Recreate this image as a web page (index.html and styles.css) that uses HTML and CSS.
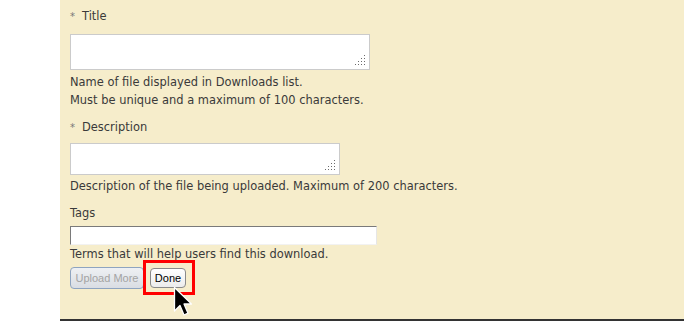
FILE: index.html
```html
<!DOCTYPE html>
<html>
<head>
<meta charset="utf-8">
<link rel="stylesheet" href="styles.css">
</head>
<body>
<div class="panel">
  <div class="label"><span class="req">*</span>Title</div>
  <div class="area area-title"><svg class="grip" width="11" height="11" viewBox="0 0 11 11"><g fill="#6b6b6b"><rect x="9" y="0" width="1" height="1"/><rect x="6" y="3" width="1" height="1"/><rect x="9" y="3" width="1" height="1"/><rect x="3" y="6" width="1" height="1"/><rect x="6" y="6" width="1" height="1"/><rect x="9" y="6" width="1" height="1"/><rect x="0" y="9" width="1" height="1"/><rect x="3" y="9" width="1" height="1"/><rect x="6" y="9" width="1" height="1"/><rect x="9" y="9" width="1" height="1"/></g></svg></div>
  <div class="help">Name of file displayed in Downloads list.</div>
  <div class="help">Must be unique and a maximum of 100 characters.</div>
  <div class="label label-gap"><span class="req">*</span>Description</div>
  <div class="area area-desc"><svg class="grip" width="11" height="11" viewBox="0 0 11 11"><g fill="#6b6b6b"><rect x="9" y="0" width="1" height="1"/><rect x="6" y="3" width="1" height="1"/><rect x="9" y="3" width="1" height="1"/><rect x="3" y="6" width="1" height="1"/><rect x="6" y="6" width="1" height="1"/><rect x="9" y="6" width="1" height="1"/><rect x="0" y="9" width="1" height="1"/><rect x="3" y="9" width="1" height="1"/><rect x="6" y="9" width="1" height="1"/><rect x="9" y="9" width="1" height="1"/></g></svg></div>
  <div class="help help-tight">Description of the file being uploaded. Maximum of 200 characters.</div>
  <div class="label label-tags">Tags</div>
  <div class="tags-input"></div>
  <div class="help help-flush">Terms that will help users find this download.</div>
  <div class="buttons">
    <button class="btn btn-disabled" disabled>Upload More</button>
    <div class="done-wrap">
      <span class="btn btn-done">Done</span>
      <div class="highlight"></div>
      <svg class="cursor" width="24" height="34" viewBox="0 0 24 34"><path d="M1.5 1.5 L1.5 25 L7 19.5 L11 29 L15 27.2 L11 18 L18.5 18 Z" fill="#000" stroke="#fff" stroke-width="1.3" stroke-linejoin="round"/></svg>
    </div>
  </div>
</div>
</body>
</html>
```
FILE: styles.css
```css
html, body {
  margin: 0;
  padding: 0;
  background: #ffffff;
}
body {
  font-family: "DejaVu Sans", sans-serif;
  font-size: 11.45px;
  color: #3a3a3a;
}
.panel {
  margin-left: 60px;
  width: 614px;
  height: 312px;
  padding: 7px 0 0 10px;
  background: #f6edcb;
  border-bottom: 2px solid #333333;
}
.label {
  line-height: 18px;
  height: 18px;
}
.req {
  color: #777;
  margin-right: 7px;
  font-size: 10px;
}
.label-gap {
  margin-top: 9px;
}
.area {
  box-sizing: border-box;
  background: #fff;
  border: 1px solid #cbcbcb;
  display: flex;
  justify-content: flex-end;
  align-items: flex-end;
  padding: 0 3px 3px 0;
}
.area-title {
  margin-top: 9px;
  width: 300px;
  height: 36px;
}
.area-desc {
  margin-top: 7px;
  width: 270px;
  height: 32px;
}
.grip {
  display: block;
}
.help {
  line-height: 18px;
  height: 18px;
}
.area-title + .help {
  margin-top: 3px;
}
.help-tight {
  margin-top: 2px;
}
.label-tags {
  margin-top: 9px;
}
.tags-input {
  box-sizing: border-box;
  margin-top: 4px;
  width: 307px;
  height: 19px;
  background: #fff;
  border-top: 1px solid #7a7a7a;
  border-left: 1px solid #7a7a7a;
  border-right: 1px solid #e6e6e6;
  border-bottom: 1px solid #f2f2f2;
}
.help-flush {
  margin-top: 0;
}
.buttons {
  display: flex;
  align-items: center;
  gap: 6px;
  margin-top: 4px;
}
.btn {
  font-family: "Liberation Sans", Arial, sans-serif;
  font-size: 11px;
  box-sizing: border-box;
  margin: 0;
  padding: 0;
  border-radius: 4px;
  white-space: nowrap;
  display: flex;
  align-items: center;
  justify-content: center;
}
.btn-disabled {
  width: 74px;
  height: 22px;
  color: #a3a3a3;
  border: 1px solid #8ea4c0;
  background: linear-gradient(#eef0f3, #d9dde3);
}
.done-wrap {
  position: relative;
}
.btn-done {
  width: 36px;
  height: 20px;
  color: #000;
  border: 1px solid #8a8a8a;
  background: linear-gradient(#ffffff, #ececec);
}
.highlight {
  position: absolute;
  left: -7px;
  top: -8px;
  width: 46px;
  height: 29px;
  border: 3px solid #ff0000;
}
.cursor {
  position: absolute;
  left: 23px;
  top: 18px;
}
```
